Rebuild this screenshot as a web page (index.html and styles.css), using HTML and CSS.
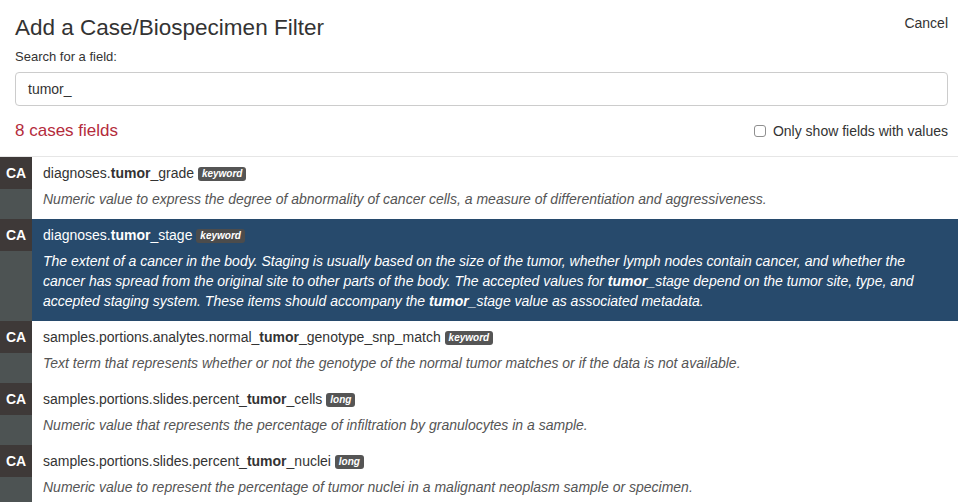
FILE: index.html
```html
<!DOCTYPE html>
<html>
<head>
<meta charset="utf-8">
<link rel="stylesheet" href="styles.css">
</head>
<body>
<div class="modal">
  <div class="top">
    <div class="head">
      <h1 class="title">Add a Case/Biospecimen Filter</h1>
      <a class="cancel">Cancel</a>
    </div>
    <label class="search-label">Search for a field:</label>
    <div class="input">tumor_</div>
    <div class="meta">
      <span class="count">8 cases fields</span>
      <label class="only"><span class="checkbox"></span>Only show fields with values</label>
    </div>
  </div>
  <div class="list">
    <div class="row">
      <div class="side"><div class="tag">CA</div></div>
      <div class="body">
        <div class="name">diagnoses.<b>tumor</b>_grade <span class="badge">keyword</span></div>
        <div class="desc">Numeric value to express the degree of abnormality of cancer cells, a measure of differentiation and aggressiveness.</div>
      </div>
    </div>
    <div class="row active">
      <div class="side"><div class="tag">CA</div></div>
      <div class="body">
        <div class="name">diagnoses.<b>tumor</b>_stage <span class="badge">keyword</span></div>
        <div class="desc">The extent of a cancer in the body. Staging is usually based on the size of the tumor, whether lymph nodes contain cancer, and whether the cancer has spread from the original site to other parts of the body. The accepted values for <b>tumor</b>_stage depend on the tumor site, type, and accepted staging system. These items should accompany the <b>tumor</b>_stage value as associated metadata.</div>
      </div>
    </div>
    <div class="row">
      <div class="side"><div class="tag">CA</div></div>
      <div class="body">
        <div class="name">samples.portions.analytes.normal_<b>tumor</b>_genotype_snp_match <span class="badge">keyword</span></div>
        <div class="desc">Text term that represents whether or not the genotype of the normal tumor matches or if the data is not available.</div>
      </div>
    </div>
    <div class="row">
      <div class="side"><div class="tag">CA</div></div>
      <div class="body">
        <div class="name">samples.portions.slides.percent_<b>tumor</b>_cells <span class="badge">long</span></div>
        <div class="desc">Numeric value that represents the percentage of infiltration by granulocytes in a sample.</div>
      </div>
    </div>
    <div class="row">
      <div class="side"><div class="tag">CA</div></div>
      <div class="body">
        <div class="name">samples.portions.slides.percent_<b>tumor</b>_nuclei <span class="badge">long</span></div>
        <div class="desc">Numeric value to represent the percentage of tumor nuclei in a malignant neoplasm sample or specimen.</div>
      </div>
    </div>
  </div>
</div>
</body>
</html>
```

FILE: styles.css
```css
* { box-sizing: border-box; }
html, body { margin: 0; padding: 0; background: #fff; }
body {
  font-family: "Liberation Sans", Arial, sans-serif;
  font-size: 14px;
  color: #333;
  overflow: hidden;
  height: 502px;
}
.top { padding: 14px 10px 0 15px; }
.head { display: flex; justify-content: space-between; align-items: flex-start; }
.title {
  margin: 0;
  font-size: 22.5px;
  font-weight: normal;
  line-height: 28px;
  color: #333;
}
.cancel { font-size: 14px; line-height: 16px; color: #333; margin-top: 1px; }
.search-label { display: block; font-size: 13px; line-height: 16px; margin-top: 7px; }
.input {
  margin-top: 7px;
  height: 34px;
  border: 1px solid #ccc;
  border-radius: 4px;
  padding: 0 12px;
  line-height: 32px;
  font-size: 14px;
  color: #333;
}
.meta {
  display: flex;
  justify-content: space-between;
  align-items: center;
  height: 50px;
  padding-bottom: 1px;
}
.count { color: #b42b3c; font-size: 17px; }
.only { display: flex; align-items: center; font-size: 14px; color: #333; }
.checkbox {
  width: 12px; height: 12px;
  border: 1px solid #8f8f8f;
  border-radius: 3px;
  margin-right: 7px;
  background: #fff;
}
.list { border-top: 1px solid #e6e6e6; }
.row { display: flex; background: #fff; }
.side { width: 32px; flex: none; background: #4d5353; }
.tag {
  height: 32px;
  background: #3e3938;
  color: #fff;
  font-weight: bold;
  font-size: 14px;
  line-height: 32px;
  text-align: center;
}
.body { flex: 1; padding: 6px 15px 10px 11px; }
.name { line-height: 20px; color: #333; }
.name b { font-weight: bold; }
.badge {
  display: inline-block;
  background: #555;
  color: #fff;
  font-size: 10px;
  font-style: italic;
  font-weight: bold;
  line-height: 14px;
  height: 14px;
  padding: 0 4px;
  border-radius: 3px;
  vertical-align: 1px;
}
.desc { margin-top: 6px; line-height: 20px; font-style: italic; color: #555; }
.desc b { line-height: 1; }
.row.active { background: #274a6c; }
.row.active .name, .row.active .desc { color: #fff; }
.row.active .badge { background: #4c4c4c; }
```
